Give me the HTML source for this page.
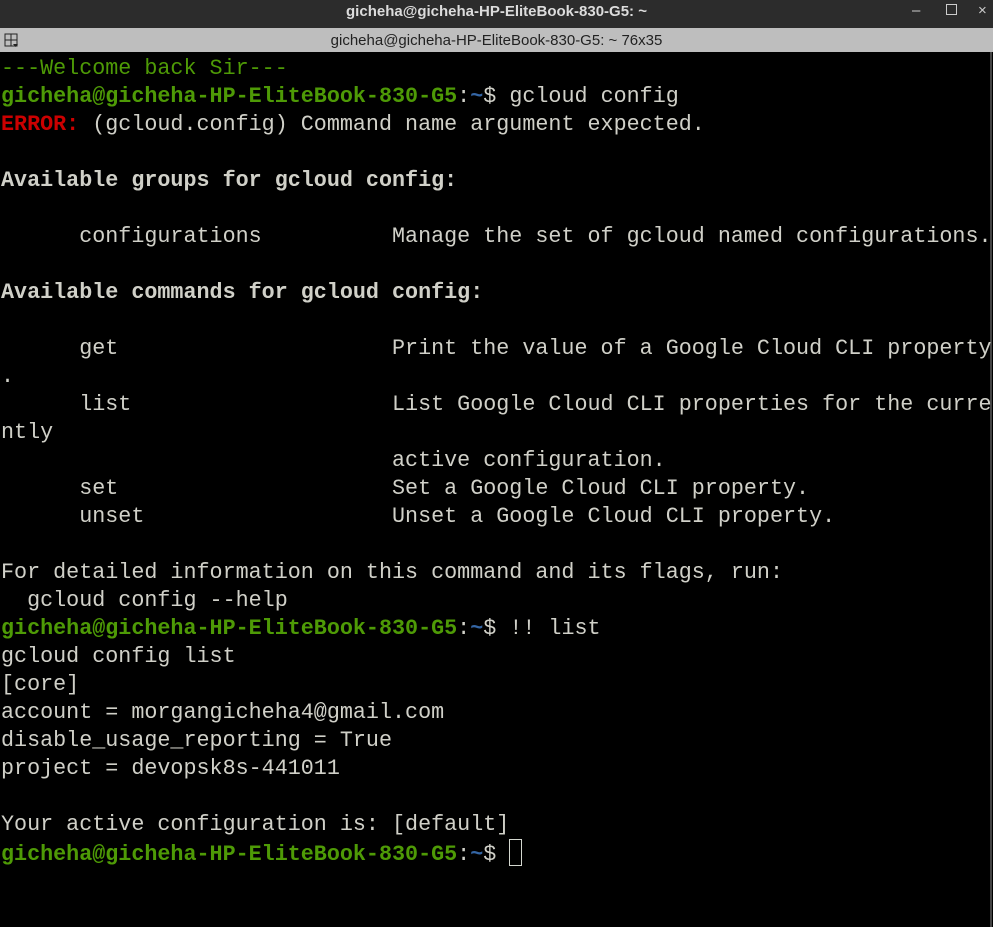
<!DOCTYPE html>
<html><head><meta charset="utf-8"><style>
html,body{margin:0;padding:0;width:993px;height:927px;overflow:hidden;background:#000;}
.t1{position:absolute;left:0;top:0;width:993px;height:28px;background:#2c2c2c;color:#dcdcdc;font:bold 15px "Liberation Sans",sans-serif;text-align:center;line-height:24px;}
.t2{position:absolute;left:0;top:28px;width:993px;height:24px;background:#bebebe;color:#222;font:15px "Liberation Sans",sans-serif;text-align:center;line-height:25px;}
.ctl{position:absolute;top:0;color:#ccc;font:15px "Liberation Sans",sans-serif;line-height:22px;}
pre{position:absolute;left:1px;top:55px;margin:0;font-family:"Liberation Mono","DejaVu Sans Mono",monospace;font-size:21.72px;line-height:28px;color:#d0d0c8;}
.g{color:#4e9a06;font-weight:bold}.b{color:#3465a4;font-weight:bold}.r{color:#cc0000;font-weight:bold}.w{font-weight:bold}
.cur{display:inline-block;width:13px;height:27px;border:1px solid #d3d7cf;vertical-align:-6px;box-sizing:border-box}
.sb{position:absolute;left:990px;top:52px;width:2px;height:875px;background:#444}
</style></head><body>
<div class="t1">gicheha@gicheha-HP-EliteBook-830-G5: ~</div>
<div class="ctl" style="left:912px">&#8211;</div>
<div class="ctl" style="left:946px;top:4px;width:9px;height:9px;border:1px solid #ccc;line-height:0"></div>
<div class="ctl" style="left:978px">&#215;</div>
<div class="t2">gicheha@gicheha-HP-EliteBook-830-G5: ~ 76x35</div>
<svg style="position:absolute;left:4px;top:33px" width="16" height="16"><rect x="1" y="1" width="12" height="12" fill="none" stroke="#222"/><line x1="7" y1="1" x2="7" y2="13" stroke="#222"/><line x1="1" y1="7" x2="13" y2="7" stroke="#222"/><path d="M9 11h5l-2.5 3z" fill="#222"/></svg>
<div class="sb"></div>
<pre><span class="g" style="font-weight:normal">---Welcome back Sir---</span>
<span class="g">gicheha@gicheha-HP-EliteBook-830-G5</span>:<span class="b">~</span>$ gcloud config
<span class="r">ERROR:</span> (gcloud.config) Command name argument expected.

<span class="w">Available groups for gcloud config:</span>

      configurations          Manage the set of gcloud named configurations.

<span class="w">Available commands for gcloud config:</span>

      get                     Print the value of a Google Cloud CLI property
.
      list                    List Google Cloud CLI properties for the curre
ntly
                              active configuration.
      set                     Set a Google Cloud CLI property.
      unset                   Unset a Google Cloud CLI property.

For detailed information on this command and its flags, run:
  gcloud config --help
<span class="g">gicheha@gicheha-HP-EliteBook-830-G5</span>:<span class="b">~</span>$ !! list
gcloud config list
[core]
account = morgangicheha4@gmail.com
disable_usage_reporting = True
project = devopsk8s-441011

Your active configuration is: [default]
<span class="g">gicheha@gicheha-HP-EliteBook-830-G5</span>:<span class="b">~</span>$ <span class="cur"></span></pre>
</body></html>
